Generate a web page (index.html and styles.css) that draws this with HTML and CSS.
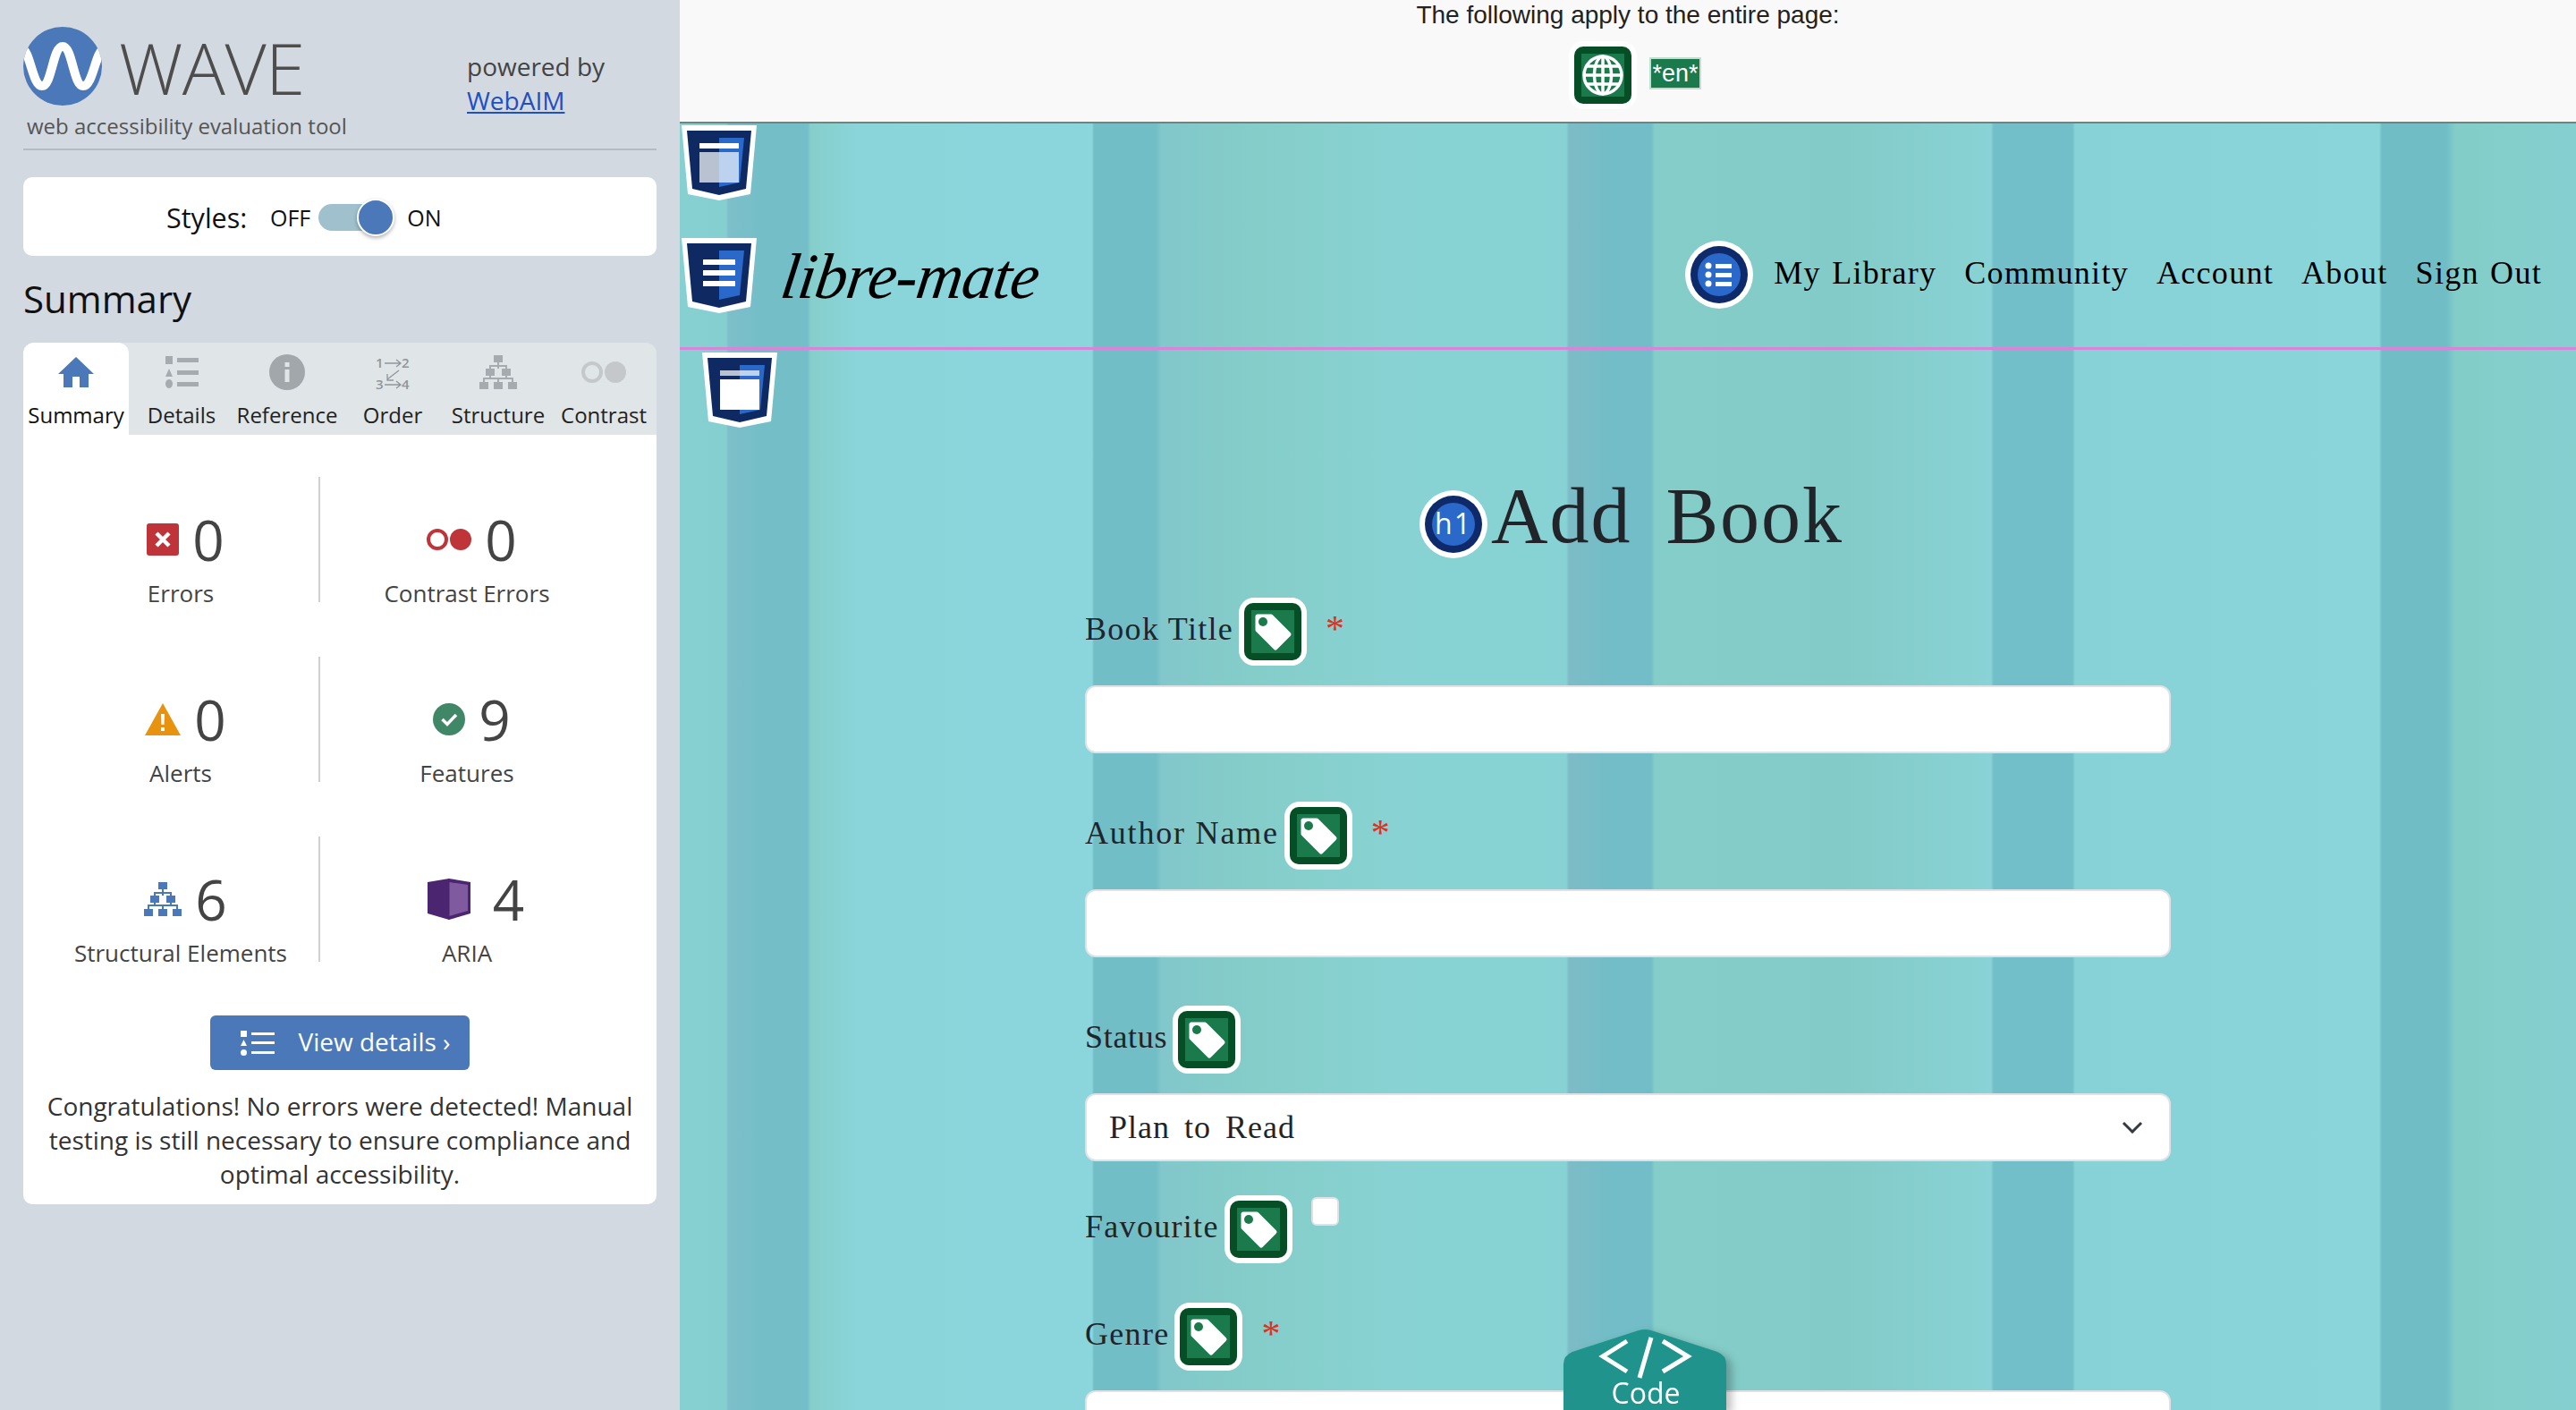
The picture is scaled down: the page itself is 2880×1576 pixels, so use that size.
FILE: index.html
```html
<!DOCTYPE html>
<html lang="en">
<head>
<meta charset="utf-8">
<title>WAVE report: Add Book</title>
<link rel="stylesheet" href="styles.css">
</head>
<body>
<svg class="defs" width="0" height="0" aria-hidden="true">
  <defs>
    <symbol id="tag" viewBox="0 0 76 76">
      <rect width="76" height="76" rx="17" fill="#fff"/>
      <rect x="6" y="6" width="64" height="64" rx="10" fill="#064f26"/>
      <rect x="14" y="14" width="48" height="48" fill="#1a7a4c"/>
      <path d="M21 21H36L56 41L41 56L21 36Z" fill="#fff" stroke="#fff" stroke-width="5" stroke-linejoin="round"/>
      <circle cx="27" cy="27" r="5" fill="#1a7a4c"/>
    </symbol>
    <symbol id="globe" viewBox="0 0 76 76">
      <rect width="76" height="76" rx="17" fill="#fff"/>
      <rect x="6" y="6" width="64" height="64" rx="10" fill="#064f26"/>
      <rect x="14" y="14" width="48" height="48" fill="#1a7a4c"/>
      <g fill="none" stroke="#fff" stroke-width="3.5">
        <circle cx="38" cy="38" r="21"/>
        <ellipse cx="38" cy="38" rx="9.5" ry="21"/>
        <path d="M38 17V59M17 38H59M20 28H56M20 48H56"/>
      </g>
    </symbol>
    <symbol id="ring" viewBox="0 0 76 76">
      <circle cx="38" cy="38" r="38" fill="#fff"/>
      <circle cx="38" cy="38" r="32" fill="#0f2a6b"/>
      <circle cx="38" cy="38" r="24" fill="#2a69c9"/>
    </symbol>
    <symbol id="shield" viewBox="0 0 84 84">
      <path d="M0 0H84L77 77L42 84L7 77Z" fill="#fff"/>
      <path d="M6 6H78L72 71L42 78L12 71Z" fill="#0f2a63"/>
      <path d="M42 14H70L65 64L42 69Z" fill="#2a69c9"/>
    </symbol>
    <symbol id="struct" viewBox="0 0 42 38">
      <path d="M16 0H26V8H16ZM7 15H17V23H7ZM25 15H35V23H25ZM0 30H10V38H0ZM16 30H26V38H16ZM32 30H42V38H32Z"/>
      <path d="M21 8V15M12 15V12H30V15M12 23V26M30 23V26M5 30V26H37V30M21 26V30" fill="none" stroke="currentColor" stroke-width="2"/>
    </symbol>
  </defs>
</svg>

<aside class="panel">
  <header class="brand">
    <div class="brand-main">
      <div class="brand-logo">
        <svg class="wave-mark" viewBox="0 0 88 88" aria-hidden="true">
          <defs><clipPath id="wave-clip"><circle cx="44" cy="44" r="44"/></clipPath></defs>
          <circle cx="44" cy="44" r="44" fill="#4a78b8"/>
          <path clip-path="url(#wave-clip)" d="M-2 24C8 26 10 66 21 66C32 66 33 22 44 22C55 22 56 66 67 66C78 66 80 30 90 24" fill="none" stroke="#fff" stroke-width="10"/>
        </svg>
        <span class="wave-word">WAVE</span>
      </div>
      <p class="tagline">web accessibility evaluation tool</p>
    </div>
    <p class="powered">powered by<br><a href="#">WebAIM</a></p>
  </header>

  <div class="styles-card">
    <span class="styles-label">Styles:</span>
    <span class="styles-state">OFF</span>
    <span class="toggle"><span class="knob"></span></span>
    <span class="styles-state">ON</span>
  </div>

  <h2 class="panel-title">Summary</h2>

  <nav class="tabs">
    <a class="tab tab-active">
      <span class="tab-icon">
        <svg width="40" height="34" viewBox="0 0 40 34" fill="#4a78b8"><path d="M20 0L40 19H34V34H24V22H16V34H6V19H0Z"/></svg>
      </span>Summary</a>
    <a class="tab">
      <span class="tab-icon">
        <svg width="37" height="36" viewBox="0 0 37 36" fill="#a5abaf"><path d="M0 0H8V9H0ZM13 2H37V7H13ZM4 14L8 23H0ZM13 16H37V21H13ZM13 29H37V34H13Z"/><ellipse cx="4" cy="31" rx="4" ry="5"/></svg>
      </span>Details</a>
    <a class="tab">
      <span class="tab-icon">
        <svg width="40" height="40" viewBox="0 0 40 40"><circle cx="20" cy="20" r="20" fill="#a1a7ab"/><path d="M17.500 9H22.500V14H17.500ZM17.500 17H22.500V31H17.500Z" fill="#e0e5e8"/></svg>
      </span>Reference</a>
    <a class="tab">
      <span class="tab-icon">
        <svg width="38" height="46" viewBox="0 -3 38 46">
          <g fill="#8f969b" font-family="Open Sans" font-size="15" font-weight="600">
            <text x="0" y="15">1</text><text x="29" y="15">2</text><text x="0" y="39">3</text><text x="29" y="39">4</text>
          </g>
          <path d="M10 10H27M23 6L28 10L23 14M26 18L13 28M13 22V29H20M10 34H27M23 30L28 34L23 38" fill="none" stroke="#8f969b" stroke-width="1.300"/>
        </svg>
      </span>Order</a>
    <a class="tab">
      <span class="tab-icon"><svg class="tab-struct" width="42" height="38"><use href="#struct"/></svg></span>Structure</a>
    <a class="tab">
      <span class="tab-icon">
        <svg width="50" height="24" viewBox="0 0 50 24"><circle cx="12" cy="12" r="10" fill="none" stroke="#c4c8cb" stroke-width="4"/><circle cx="38" cy="12" r="12" fill="#c4c8cb"/></svg>
      </span>Contrast</a>
  </nav>

  <section class="summary">
    <div class="stats">
      <div class="stat stat-left">
        <div class="stat-line">
          <svg width="36" height="36" viewBox="0 0 36 36"><rect width="36" height="36" rx="3" fill="#bf3438"/><path d="M11 11L25 25M25 11L11 25" stroke="#fff" stroke-width="4.500"/></svg>
          <span class="stat-num">0</span>
        </div>
        <span class="stat-name">Errors</span>
      </div>
      <div class="stat">
        <div class="stat-line">
          <svg width="50" height="24" viewBox="0 0 50 24"><circle cx="12" cy="12" r="10" fill="none" stroke="#bf3438" stroke-width="4"/><circle cx="38" cy="12" r="12" fill="#bf3438"/></svg>
          <span class="stat-num">0</span>
        </div>
        <span class="stat-name">Contrast Errors</span>
      </div>
      <div class="stat stat-left">
        <div class="stat-line">
          <svg width="40" height="36" viewBox="0 0 40 36"><path d="M20 0L40 36H0Z" fill="#e8930f"/><path d="M18 12H22L21.500 24H18.500ZM18 27H22V31H18Z" fill="#fff"/></svg>
          <span class="stat-num">0</span>
        </div>
        <span class="stat-name">Alerts</span>
      </div>
      <div class="stat">
        <div class="stat-line">
          <svg width="36" height="36" viewBox="0 0 36 36"><circle cx="18" cy="18" r="18" fill="#3f8767"/><path d="M10.500 18L16 23.500L26 13" fill="none" stroke="#fff" stroke-width="3.500"/></svg>
          <span class="stat-num">9</span>
        </div>
        <span class="stat-name">Features</span>
      </div>
      <div class="stat stat-left">
        <div class="stat-line">
          <svg class="stat-struct" width="42" height="38"><use href="#struct"/></svg>
          <span class="stat-num">6</span>
        </div>
        <span class="stat-name">Structural Elements</span>
      </div>
      <div class="stat">
        <div class="stat-line stat-line-wide">
          <svg width="48" height="46" viewBox="0 0 48 46"><path d="M0 4L24 0L48 4V39L24 46L0 39Z" fill="#4b2570"/><path d="M24 4L45 7V36L24 42Z" fill="#7f5a9f"/><path d="M24 0V46" stroke="#4b2570" stroke-width="1"/></svg>
          <span class="stat-num">4</span>
        </div>
        <span class="stat-name">ARIA</span>
      </div>
    </div>
    <a class="details-btn">
      <svg width="38" height="30" viewBox="0 0 38 30" fill="#fff"><path d="M0 1H7V8H0ZM12 3H38V6H12ZM3.500 11L7 18H0ZM12 13H38V16H12ZM12 24H38V27H12Z"/><circle cx="3.500" cy="25.500" r="3.500"/></svg>
      <span class="details-text">View details ›</span>
    </a>
    <p class="congrats">Congratulations! No errors were detected! Manual testing is still necessary to ensure compliance and optimal accessibility.</p>
  </section>
</aside>

<main class="viewer">
  <div class="page-notes">
    <p class="notes-text">The following apply to the entire page:</p>
    <div class="notes-icons">
      <svg class="wave-icon"><use href="#globe"/></svg>
      <span class="lang-tag">*en*</span>
    </div>
  </div>

  <div class="page">
    <svg class="shield shield-top" viewBox="0 0 84 84">
      <use href="#shield"/>
      <path d="M20 20H64V26H20Z" fill="#fff"/>
      <path d="M20 30H42V64H20Z" fill="#b9c2d1"/>
      <path d="M42 30H64V64H42Z" fill="#bcd2ef"/>
    </svg>
    <svg class="shield shield-nav" viewBox="0 0 84 84">
      <use href="#shield"/>
      <path d="M24 24H60V30H24ZM24 36H60V42H24ZM24 48H60V54H24Z" fill="#fff"/>
    </svg>
    <svg class="shield shield-main" viewBox="0 0 84 84">
      <use href="#shield"/>
      <path d="M20 20H42V26H20Z" fill="#b9c2d1"/>
      <path d="M42 20H64V26H42Z" fill="#bcd2ef"/>
      <path d="M20 30H64V64H20Z" fill="#fff"/>
    </svg>

    <header class="site-nav">
      <span class="site-logo">libre-mate</span>
      <nav class="site-links">
        <svg class="nav-badge" viewBox="0 0 76 76">
          <use href="#ring"/>
          <path d="M34 26H52V31H34ZM34 36H52V41H34ZM34 46H52V51H34Z" fill="#fff"/>
          <circle cx="26" cy="28" r="3.500" fill="#fff"/><circle cx="26" cy="38" r="3.500" fill="#fff"/><circle cx="26" cy="48" r="3.500" fill="#fff"/>
        </svg>
        <a>My Library</a>
        <a>Community</a>
        <a>Account</a>
        <a>About</a>
        <a>Sign Out</a>
      </nav>
    </header>

    <section class="form-wrap">
      <h1 class="page-title">
        <svg class="title-badge" viewBox="0 0 76 76">
          <use href="#ring"/>
          <text x="38" y="49" text-anchor="middle" fill="#fff" font-family="Open Sans" font-size="32">h1</text>
        </svg>
        <span class="title-text">Add Book</span>
      </h1>

      <div class="field-head"><label>Book Title</label><svg class="wave-icon"><use href="#tag"/></svg><span class="req">*</span></div>
      <div class="control control-input"></div>

      <div class="field-head"><label class="label-wide">Author Name</label><svg class="wave-icon"><use href="#tag"/></svg><span class="req">*</span></div>
      <div class="control control-input"></div>

      <div class="field-head"><label class="label-tight">Status</label><svg class="wave-icon"><use href="#tag"/></svg></div>
      <div class="control control-select">
        <span>Plan to Read</span>
        <svg width="24" height="14" viewBox="0 0 24 14"><path d="M2 2L12 12L22 2" fill="none" stroke="#343a40" stroke-width="3"/></svg>
      </div>

      <div class="field-head field-check"><label>Favourite</label><svg class="wave-icon"><use href="#tag"/></svg><span class="checkbox"></span></div>

      <div class="field-head field-genre"><label>Genre</label><svg class="wave-icon"><use href="#tag"/></svg><span class="req">*</span></div>
      <div class="control control-input"></div>
    </section>

    <div class="code-tab">
      <svg class="code-shape" viewBox="0 0 182 91">
        <path d="M0 40Q0 30 10 26L84 2Q91 0 98 2L172 26Q182 30 182 40V91H0Z" fill="#1f938c"/>
        <path d="M71 14L44 31L71 48M111 14L139 31L111 48M98 10L85 55" fill="none" stroke="#fff" stroke-width="5"/>
      </svg>
      <span class="code-label">Code</span>
    </div>
  </div>
</main>
</body>
</html>
```
FILE: styles.css
```css
* { box-sizing: border-box; }
html, body { margin: 0; padding: 0; }
body {
  width: 2880px;
  height: 1576px;
  display: flex;
  overflow: hidden;
  font-family: "Open Sans", sans-serif;
  color: #333;
}
.defs { position: absolute; }
p, h1, h2 { margin: 0; font-weight: 400; }
svg { display: block; flex: none; }

/* side panel */
.panel {
  width: 760px;
  flex: none;
  padding: 30px 26px 0;
  background: #d3d9e0;
}
.brand {
  height: 138px;
  display: flex;
  border-bottom: 2px solid #b5bbc3;
}
.brand-main { width: 496px; }
.brand-logo { display: flex; align-items: center; gap: 19px; height: 88px; }
.wave-mark { width: 88px; height: 88px; }
.wave-word {
  font-size: 80px;
  line-height: 88px;
  font-weight: 300;
  color: #4d4d4d;
  letter-spacing: -.5px;
  margin-bottom: -2px;
}
.tagline { margin: 7px 0 0 4px; font-size: 24px; line-height: 32px; color: #555; white-space: nowrap; }
.powered { margin-top: 25px; font-size: 28px; line-height: 38px; color: #444; }
.powered a { color: #1f4fc0; text-decoration: underline; }

.styles-card {
  height: 88px;
  margin-top: 30px;
  padding: 2px 0 0 160px;
  display: flex;
  align-items: center;
  background: #fff;
  border-radius: 10px;
  color: #111;
}
.styles-label { width: 116px; font-size: 30.500px; }
.styles-state { font-size: 25px; }
.toggle {
  position: relative;
  width: 72px;
  height: 30px;
  margin: 0 27px 0 9px;
  background: #9fc0cc;
  border-radius: 15px;
}
.knob {
  position: absolute;
  left: 43px;
  top: -6px;
  width: 42px;
  height: 42px;
  border-radius: 50%;
  background: #4a78b8;
  border: 2px solid #fff;
  box-shadow: 0 2px 4px rgba(0,0,0,.3);
}
.panel-title { margin-top: 20px; font-size: 42px; line-height: 56px; color: #111; }

.tabs {
  height: 103px;
  margin-top: 21px;
  display: grid;
  grid-template-columns: repeat(6, 118px);
  background: #e0e5e8;
  border-radius: 12px 12px 0 0;
}
.tab {
  padding-top: 10px;
  display: flex;
  flex-direction: column;
  align-items: center;
  font-size: 24px;
  line-height: 32px;
  color: #222;
  white-space: nowrap;
}
.tab-active { background: #fff; border-radius: 12px 12px 0 0; color: #111; }
.tab-icon { height: 46px; margin-bottom: 9px; display: flex; align-items: center; }
.tab-struct { fill: #a5abaf; color: #a5abaf; }

.summary {
  height: 860px;
  padding: 47px 20px 0;
  background: #fff;
  border-radius: 0 0 10px 10px;
}
.stats {
  display: grid;
  grid-template-columns: 312px 328px;
  grid-auto-rows: 140px;
  row-gap: 61px;
}
.stat {
  padding-top: 39px;
  display: flex;
  flex-direction: column;
  align-items: center;
}
.stat-left { padding-left: 2px; border-right: 2px solid #d0d0d0; }
.stat-line { height: 62px; padding-left: 11px; display: flex; align-items: center; gap: 15px; }
.stat-line-wide { padding-left: 20px; gap: 25px; }
.stat-num { font-size: 62px; line-height: 62px; color: #444; }
.stat-name { margin-top: 12px; font-size: 26px; line-height: 34px; color: #444; white-space: nowrap; }
.stat-struct { fill: #4a78b8; color: #4a78b8; }

.details-btn {
  width: 290px;
  height: 61px;
  margin: 60px auto 0;
  padding-left: 13px;
  display: flex;
  align-items: center;
  justify-content: center;
  gap: 26px;
  background: #4a78b8;
  border-radius: 6px;
  color: #fff;
  font-size: 28px;
}
.details-text { margin-bottom: 3px; }
.congrats {
  margin-top: 21px;
  text-align: center;
  font-size: 28px;
  line-height: 38px;
  color: #333;
}

/* reviewed page */
.viewer { flex: 1; min-width: 0; display: flex; flex-direction: column; }
.page-notes {
  height: 138px;
  flex: none;
  background: #f9f9f9;
  border-bottom: 2px solid #77807a;
  text-align: center;
  font-family: "Liberation Sans", Arial, sans-serif;
}
.notes-text { font-size: 28px; line-height: 34px; color: #222; }
.notes-icons {
  margin-top: 12px;
  padding-left: 16px;
  display: flex;
  justify-content: center;
  align-items: center;
  gap: 14px;
}
.wave-icon { width: 76px; height: 76px; }
.lang-tag {
  height: 36px;
  margin-top: -5px;
  padding: 0 1px;
  border: 2px solid #c5dcd0;
  background: #1a7a4c;
  color: #fff;
  font-size: 27px;
  line-height: 32px;
}

.page {
  position: relative;
  flex: 1;
  overflow: hidden;
  font-family: "Liberation Serif", "Times New Roman", serif;
  background: linear-gradient(90deg,
    #86d0d2 0, #85cfd0 52px, #7dbfca 54px, #74bec8 90px, #74bec8 143px, #85cecb 146px,
    #8ad5da 200px, #8bd6dc 461px, #72bec7 463px, #72bec7 533px, #82c7cb 538px,
    #84cdc9 640px, #88d2d3 800px, #87d2d4 991px, #7dbcc6 994px, #72bdc7 1040px, #72bdc7 1086px, #85cdc8 1090px,
    #83cbc8 1300px, #89d2d5 1466px, #72bfc9 1469px, #72bfc9 1557px, #87d2d6 1560px,
    #89d5da 1900px, #70bdc6 1903px, #70bdc6 1975px, #83cdc8 1985px, #85cfd0 2120px);
}
.shield { position: absolute; width: 84px; height: 84px; }
.shield-top { left: 2px; top: 2px; }
.shield-nav { left: 2px; top: 128px; }
.shield-main { left: 25px; top: 256px; }

.site-nav {
  height: 253px;
  padding: 131px 38px 0 114px;
  display: flex;
  justify-content: space-between;
  align-items: flex-start;
  border-bottom: 3px solid #d884d9;
}
.site-logo {
  font-family: "Liberation Serif", cursive;
  font-style: italic;
  font-size: 72px;
  line-height: 76px;
  margin-top: 2px;
  color: #000;
  letter-spacing: -1px;
  transform: skewX(-8deg);
}
.site-links {
  display: flex;
  align-items: center;
  font-size: 36px;
  letter-spacing: 1.300px;
  word-spacing: 2px;
  color: #000;
  gap: 31px;
}
.site-links a { margin-bottom: 4px; }
.nav-badge { width: 76px; height: 76px; margin-right: -8px; }

.form-wrap { width: 1214px; margin: 0 auto; color: #212529; }
.page-title {
  height: 76px;
  margin: 157px 0 44px;
  padding-left: 8px;
  display: flex;
  align-items: center;
  justify-content: center;
  gap: 4px;
  font-size: 88px;
  letter-spacing: 2px;
  word-spacing: 14px;
  line-height: 76px;
}
.title-text { margin-bottom: 18px; }
.title-badge { width: 76px; height: 76px; }
.field-head {
  height: 76px;
  display: flex;
  align-items: center;
  margin-bottom: 22px;
  font-size: 36px;
  letter-spacing: 1.300px;
}
.field-head label { margin-bottom: 6px; }
.field-head .label-wide { letter-spacing: 1.800px; }
.field-head .label-tight { letter-spacing: .7px; }
.field-head .wave-icon { margin-left: 6px; }
.req { margin: -6px 0 0 21px; font-size: 42px; color: #e0301e; }
.control {
  height: 76px;
  margin-bottom: 54px;
  background: #fff;
  border: 2px solid #dee2e6;
  border-radius: 12px;
}
.control-select {
  margin-bottom: 38px;
  padding: 0 29px 0 25px;
  display: flex;
  align-items: center;
  justify-content: space-between;
  font-size: 36px;
  letter-spacing: 1px;
  word-spacing: 6px;
}
.field-check { margin-bottom: 44px; }
.field-genre { margin-bottom: 22px; }
.checkbox {
  width: 31px;
  height: 32px;
  margin: 2px 0 0 21px;
  align-self: flex-start;
  background: #fff;
  border: 2px solid #dee2e6;
  border-radius: 6px;
}
.code-tab {
  position: absolute;
  left: 988px;
  top: 1347px;
  width: 182px;
  height: 91px;
  filter: drop-shadow(6px 4px 5px rgba(0,0,0,.25));
}
.code-shape { position: absolute; inset: 0; width: 182px; height: 91px; }
.code-label {
  position: absolute;
  left: 2px;
  right: 0;
  top: 51px;
  text-align: center;
  font-family: "Open Sans", sans-serif;
  font-size: 32px;
  line-height: 42px;
  color: #fff;
}
```
